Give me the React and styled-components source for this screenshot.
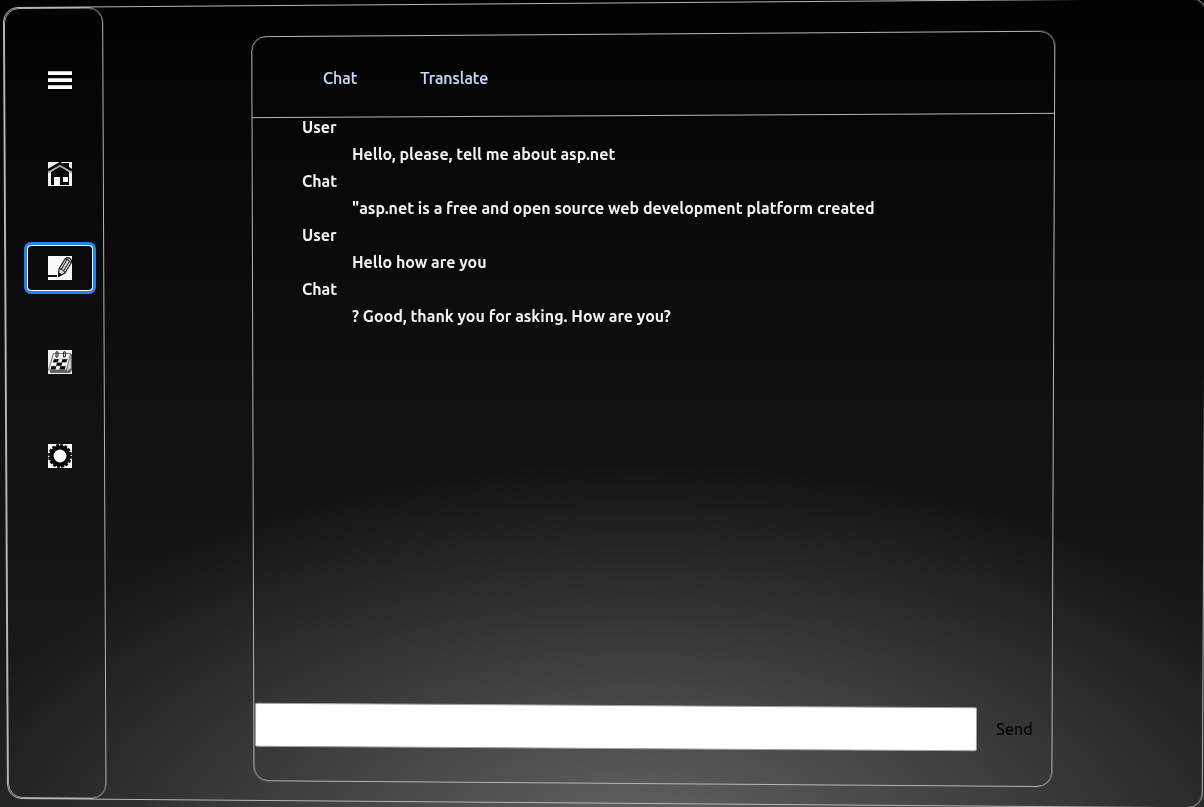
import React, { useState } from "react";
import styled, { createGlobalStyle } from "styled-components";

const GlobalStyle = createGlobalStyle`
  *, *::before, *::after { box-sizing: border-box; }
  body {
    margin: 0;
    background: #000;
    color: #f2f2f2;
    font-family: Ubuntu, "Noto Sans", sans-serif;
    font-size: 16px;
    font-weight: 500;
  }
  button, input { font: inherit; }
`;

const Shell = styled.div`
  position: relative;
  display: grid;
  grid-template-columns: 104px 1fr;
  min-height: 100vh;
  overflow: hidden;
  background:
    radial-gradient(ellipse 58% 46% at 53% 103%, rgba(255, 255, 255, 0.3), rgba(255, 255, 255, 0.15) 50%, transparent),
    linear-gradient(#020202, #1e1e1e);
`;

/* Decorative outlines, tilted together behind the content.
   The padding keeps the strokes off the edge of the tilted layer. */
const Plane = styled.div`
  position: absolute;
  inset: 0 2px -2px -6px;
  display: grid;
  padding: 4px;
  transform: perspective(1000px) rotateX(-0.5deg) rotateY(-1.1deg);
  pointer-events: none;
`;

const OuterFrame = styled.div`
  display: grid;
  grid-template-columns: 101px 1fr;
  border: 1px solid #b4b4b4;
  border-radius: 15px;
`;

const SidebarFrame = styled.div`
  border: 1px solid #b4b4b4;
  border-radius: 15px;
`;

const ChatFrame = styled.div`
  margin: 30px 147px 19px 150px;
  border: 1px solid #b4b4b4;
  border-radius: 15px;
`;

const HeaderRule = styled.div`
  height: 81px;
  border-bottom: 1px solid #b4b4b4;
`;

const Sidebar = styled.nav`
  position: relative;
  display: flex;
  flex-direction: column;
  align-items: center;
  gap: 50px;
  padding: 58px 0 0 15px;
`;

const NavButton = styled.button`
  display: flex;
  align-items: center;
  justify-content: center;
  width: 64px;
  height: 44px;
  padding: 0;
  border: 0;
  border-radius: 3px;
  background: transparent;
  outline: none;
  cursor: pointer;
  box-shadow: ${(p) =>
    p.$active ? "0 0 0 1px #fff, 0 0 0 4px #1f83f5" : "none"};
`;

const Icon = styled.svg`
  display: block;
  width: 24px;
  height: 24px;
`;

const ChatPanel = styled.main`
  position: relative;
  display: flex;
  flex-direction: column;
  margin: 34px 152px 22px 148px;
`;

const Tabs = styled.div`
  display: flex;
  align-items: center;
  gap: 63px;
  height: 80px;
  padding: 8px 71px 0;
`;

const Tab = styled.button`
  padding: 0;
  border: 0;
  background: transparent;
  color: #c9dcff;
  line-height: 24px;
  -webkit-text-stroke: 0.2px currentColor;
  cursor: pointer;
`;

const Messages = styled.dl`
  flex: 1;
  margin: 0;
  padding: 0 50px;
  font-weight: 600;
`;

const Author = styled.dt`
  line-height: 26px;
`;

const Message = styled.dd`
  margin: 0 0 0 50px;
  line-height: 28px;
`;

const Composer = styled.form`
  display: flex;
  align-items: center;
  margin-bottom: 36px;
  padding-left: 3px;
`;

const MessageInput = styled.input`
  flex: 1;
  min-width: 0;
  height: 44px;
  padding: 0 12px;
  border: 1px solid #9aa0a4;
  border-radius: 2px;
  background: #fff;
  color: #111;
  outline: none;
  transform: rotate(0.36deg);
`;

const SendButton = styled.button`
  width: 75px;
  padding: 4px 0 0;
  border: 0;
  background: transparent;
  color: #0a0a0a;
  -webkit-text-stroke: 0.2px currentColor;
  cursor: pointer;
`;

const MenuIcon = () => (
  <Icon viewBox="0 0 24 24" aria-hidden="true">
    <path fill="#fff" d="M0 3.300h24v3.800H0zM0 10.300h24v3.800H0zM0 17.300h24v3.800H0z" />
  </Icon>
);

const HomeIcon = () => (
  <Icon viewBox="0 0 24 24" aria-hidden="true">
    <path fill="#f4f4f4" d="M0 0h24v24H0z" />
    <path fill="#080808" d="M3 10 12 4l9 6v13H3z" />
    <path fill="#080808" d="M15 1h6v7l-6-4z" />
    <path fill="none" stroke="#080808" strokeWidth="3" d="M0 8.500 12 1.500l12 7" />
    <path fill="none" stroke="#a5a5a5" strokeWidth="1.600" d="M0 10.500 12 4l12 6.500" />
    <path fill="#fff" d="M6 15h6v9H6zM15 15h5v5h-5z" />
  </Icon>
);

const PencilIcon = () => (
  <Icon viewBox="0 0 24 24" aria-hidden="true">
    <path fill="#fafafa" d="M0 0h24v24H0z" />
    <path fill="#111" d="M0 19h9v2H0z" />
    <path fill="#ddd" stroke="#222" strokeWidth="1.200" d="M10.500 20.500 11 13l6-10q3-2.500 5.500 0 2 2 .5 4l-6 10z" />
    <path fill="none" stroke="#333" strokeWidth="1.100" d="m13.200 13.500 5.500-9.500M15.500 15l5.500-9M11 13q1.500-.5 2.200.5 1.800 0 2.300 1.500 1.500 0 1.500 2M17 3q4 .5 6 4" />
    <path fill="#080808" d="m10 21 .5-4.500q2.500.5 3.500 2.500z" />
  </Icon>
);

const CalendarIcon = () => (
  <Icon viewBox="0 0 24 24" aria-hidden="true">
    <path fill="#f2f2f2" d="M0 0h24v24H0z" />
    <path fill="#666" d="M5 4h19v16l-2 3H2v-4z" />
    <path fill="#fff" stroke="#555" strokeWidth=".8" d="M5.500 3.500h17L18.500 20H.5z" />
    <path fill="#d5d5d5" d="m22.500 4 .5 14-4 3z" />
    <path fill="#0a0a0a" d="M6 9h5l-1.200 3.500h-5zM14.500 9h5l-1.200 3.500h-5zM9 12.500h5.500L13.300 16H8zM3.500 16h5l-1 3.500h-5zM12.300 16h5.500l-1 3.500h-5.500z" />
    <path fill="none" stroke="#999" strokeWidth=".6" d="M4.500 9h16M3.500 12.500h15.500M2.500 16h15.500" />
    <path fill="none" stroke="#333" strokeWidth="1.200" d="M8 7V3q1-3 2 0v3q-.8 1.500-2 1M15.500 7V3q1-3 2 0v3q-.8 1.500-2 1" />
  </Icon>
);

const GearIcon = () => (
  <Icon viewBox="0 0 24 24" aria-hidden="true">
    <path fill="#fff" d="M0 0h24v24H0z" />
    <circle cx="12" cy="12" r="8.500" fill="none" stroke="#080808" strokeWidth="4.200" />
    <circle cx="12" cy="12" r="11" fill="none" stroke="#080808" strokeWidth="2" strokeDasharray="2.900 1.420" />
  </Icon>
);

const NAV = [
  { label: "Menu", Glyph: MenuIcon },
  { label: "Home", Glyph: HomeIcon },
  { label: "Write", Glyph: PencilIcon },
  { label: "Calendar", Glyph: CalendarIcon },
  { label: "Settings", Glyph: GearIcon },
];

const CONVERSATION = [
  ["User", "Hello, please, tell me about asp.net"],
  ["Chat", "\"asp.net is a free and open source web development platform created"],
  ["User", "Hello how are you"],
  ["Chat", "? Good, thank you for asking. How are you?"],
];

export default function App() {
  const [active, setActive] = useState("Write");
  return (
    <>
      <GlobalStyle />
      <Shell>
        <Plane aria-hidden="true">
          <OuterFrame>
            <SidebarFrame />
            <ChatFrame>
              <HeaderRule />
            </ChatFrame>
          </OuterFrame>
        </Plane>
        <Sidebar aria-label="Main">
          {NAV.map(({ label, Glyph }) => (
            <NavButton
              key={label}
              type="button"
              aria-label={label}
              $active={active === label}
              onClick={() => setActive(label)}
            >
              <Glyph />
            </NavButton>
          ))}
        </Sidebar>
        <ChatPanel>
          <Tabs>
            <Tab type="button">Chat</Tab>
            <Tab type="button">Translate</Tab>
          </Tabs>
          <Messages>
            {CONVERSATION.map(([author, text], i) => (
              <React.Fragment key={i}>
                <Author>{author}</Author>
                <Message>{text}</Message>
              </React.Fragment>
            ))}
          </Messages>
          <Composer onSubmit={(e) => e.preventDefault()}>
            <MessageInput type="text" aria-label="Message" />
            <SendButton type="submit">Send</SendButton>
          </Composer>
        </ChatPanel>
      </Shell>
    </>
  );
}
